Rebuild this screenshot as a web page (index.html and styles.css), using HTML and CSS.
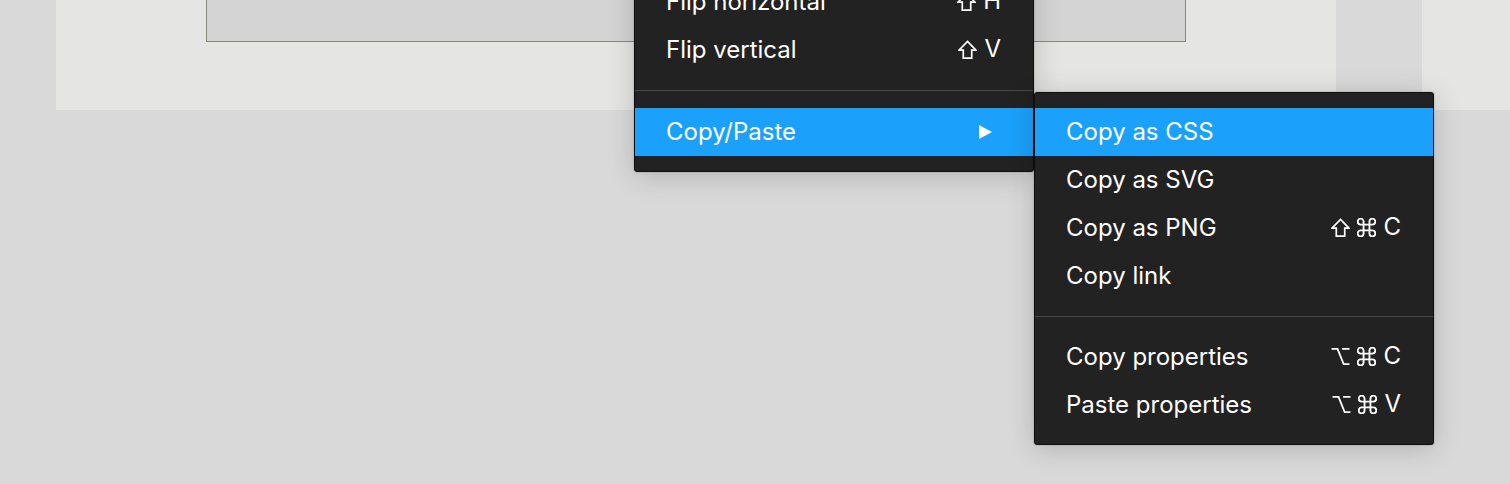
FILE: index.html
```html
<!DOCTYPE html>
<html>
<head>
<meta charset="utf-8">
<link rel="stylesheet" href="styles.css">
</head>
<body>
<div class="canvas">
  <div class="topband">
    <div class="gutter"></div>
    <div class="frame"><div class="frame-box"></div></div>
    <div class="strip"></div>
    <div class="frame frame-right"></div>
  </div>

  <div class="menu menu-main">
    <div class="item"><span class="label">Flip horizontal</span>
      <span class="key">
        <svg class="sym" width="19" height="19" viewBox="0 0 18 18"><path d="M9 1.3 L17 9.6 L13 9.6 L13 17.2 L5 17.2 L5 9.6 L1 9.6 Z" fill="none" stroke="#fff" stroke-width="1.6" stroke-linejoin="miter"/></svg>
        <span class="ch">H</span>
      </span>
    </div>
    <div class="item"><span class="label">Flip vertical</span>
      <span class="key">
        <svg class="sym" width="19" height="19" viewBox="0 0 18 18"><path d="M9 1.3 L17 9.6 L13 9.6 L13 17.2 L5 17.2 L5 9.6 L1 9.6 Z" fill="none" stroke="#fff" stroke-width="1.6" stroke-linejoin="miter"/></svg>
        <span class="ch">V</span>
      </span>
    </div>
    <div class="sep"></div>
    <div class="item active"><span class="label">Copy/Paste</span>
      <svg class="arrow" width="13" height="14" viewBox="0 0 13 14"><path d="M0 0 L13 7 L0 14 Z" fill="#fff"/></svg>
    </div>
  </div>

  <div class="menu menu-sub">
    <div class="item active"><span class="label">Copy as CSS</span></div>
    <div class="item"><span class="label">Copy as SVG</span></div>
    <div class="item"><span class="label">Copy as PNG</span>
      <span class="key">
        <svg class="sym" width="19" height="19" viewBox="0 0 18 18"><path d="M9 1.3 L17 9.6 L13 9.6 L13 17.2 L5 17.2 L5 9.6 L1 9.6 Z" fill="none" stroke="#fff" stroke-width="1.6" stroke-linejoin="miter"/></svg>
        <svg class="sym" width="19" height="19" viewBox="2.3 2.3 19.4 19.4"><path d="M15 6v12a3 3 0 1 0 3-3H6a3 3 0 1 0 3 3V6a3 3 0 1 0-3 3h12a3 3 0 1 0-3-3" fill="none" stroke="#fff" stroke-width="1.9"/></svg>
        <span class="ch">C</span>
      </span>
    </div>
    <div class="item"><span class="label">Copy link</span></div>
    <div class="sep"></div>
    <div class="item"><span class="label">Copy properties</span>
      <span class="key">
        <svg class="sym" width="19" height="19" viewBox="0 0 18 18"><path d="M0.5 1.8 H6.2 L12 16.2 H17.5 M10.5 1.8 H17.5" fill="none" stroke="#fff" stroke-width="1.7"/></svg>
        <svg class="sym" width="19" height="19" viewBox="2.3 2.3 19.4 19.4"><path d="M15 6v12a3 3 0 1 0 3-3H6a3 3 0 1 0 3 3V6a3 3 0 1 0-3 3h12a3 3 0 1 0-3-3" fill="none" stroke="#fff" stroke-width="1.9"/></svg>
        <span class="ch">C</span>
      </span>
    </div>
    <div class="item"><span class="label">Paste properties</span>
      <span class="key">
        <svg class="sym" width="19" height="19" viewBox="0 0 18 18"><path d="M0.5 1.8 H6.2 L12 16.2 H17.5 M10.5 1.8 H17.5" fill="none" stroke="#fff" stroke-width="1.7"/></svg>
        <svg class="sym" width="19" height="19" viewBox="2.3 2.3 19.4 19.4"><path d="M15 6v12a3 3 0 1 0 3-3H6a3 3 0 1 0 3 3V6a3 3 0 1 0-3 3h12a3 3 0 1 0-3-3" fill="none" stroke="#fff" stroke-width="1.9"/></svg>
        <span class="ch">V</span>
      </span>
    </div>
  </div>
</div>
</body>
</html>
```

FILE: styles.css
```css
html, body {
  margin: 0;
  padding: 0;
}
body {
  background: #d9d9d9;
  width: 1510px;
  height: 484px;
  overflow: hidden;
  font-family: Inter, "Noto Sans", sans-serif;
}
.canvas {
  position: relative;
  width: 1510px;
  height: 484px;
}
.topband {
  display: flex;
  height: 110px;
}
.gutter {
  width: 56px;
}
.frame {
  width: 1280px;
  background: #e5e5e3;
}
.frame-right {
  flex: 1;
}
.strip {
  width: 86px;
  background: #d9d9d9;
}
.frame-box {
  margin-left: 150px;
  width: 978px;
  height: 41px;
  background: #d4d4d4;
  border: 1px solid #878a76;
  border-top: none;
}
.menu {
  position: absolute;
  width: 398px;
  background: #222222;
  border: 1px solid #0e0e0e;
  border-radius: 3px;
  padding: 15px 0;
  box-shadow: 0 4px 28px rgba(0, 0, 0, 0.18), 0 0 2px rgba(0, 0, 0, 0.25);
  color: #ffffff;
}
.menu-main {
  left: 634px;
  top: -38px;
}
.menu-sub {
  left: 1034px;
  top: 92px;
}
.item {
  box-sizing: border-box;
  height: 48px;
  display: flex;
  align-items: center;
  justify-content: space-between;
  padding: 0 32px 2px 31px;
  font-size: 24px;
}
.item.active {
  background: #1ba1fb;
}
.key {
  display: flex;
  align-items: center;
  gap: 7px;
}
.sym {
  display: block;
}
.ch {
  line-height: 1;
}
.arrow {
  display: block;
  margin: 2px 9px 0 0;
}
.sep {
  height: 1px;
  background: #484848;
  margin: 16px 0 17px;
}
.menu-sub .sep {
  margin: 16px 0 16px;
}
```
